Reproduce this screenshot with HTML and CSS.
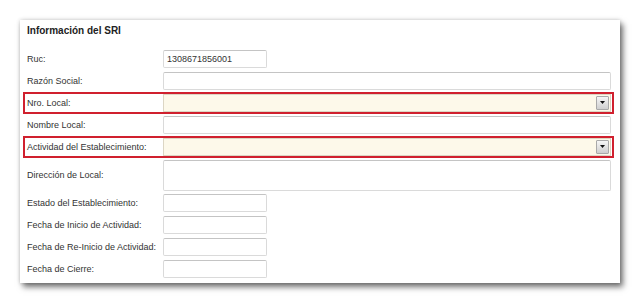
FILE: index.html
```html
<!doctype html>
<html lang="es">
<head>
    <meta charset="UTF-8">
    <link rel="stylesheet" href="styles.css">
    <title>Información del SRI</title>
</head>
<body>
    <div class="panel">
        <h2 class="panel-title">Información del SRI</h2>

        <div class="row">
            <label for="ruc">Ruc:</label>
            <input type="text" id="ruc" class="short" value="1308671856001">
        </div>

        <div class="row">
            <label for="razon">Razón Social:</label>
            <input type="text" id="razon" class="wide">
        </div>

        <!-- campo marcado -->
        <div class="row marked">
            <label for="nro-local">Nro. Local:</label>
            <div class="select-box">
                <select id="nro-local"></select>
                <span class="arrow"><svg width="5" height="4" viewBox="0 0 5 4"><path d="M0 0H5L2.5 3Z" fill="#111"/></svg></span>
            </div>
        </div>

        <div class="row">
            <label for="nombre">Nombre Local:</label>
            <input type="text" id="nombre" class="wide">
        </div>

        <!-- campo marcado -->
        <div class="row marked">
            <label for="actividad">Actividad del Establecimiento:</label>
            <div class="select-box">
                <select id="actividad"></select>
                <span class="arrow"><svg width="5" height="4" viewBox="0 0 5 4"><path d="M0 0H5L2.5 3Z" fill="#111"/></svg></span>
            </div>
        </div>

        <div class="row tall">
            <label for="direccion">Dirección de Local:</label>
            <textarea id="direccion" class="wide"></textarea>
        </div>

        <div class="row">
            <label for="estado">Estado del Establecimiento:</label>
            <input type="text" id="estado" class="short">
        </div>

        <div class="row">
            <label for="inicio">Fecha de Inicio de Actividad:</label>
            <input type="text" id="inicio" class="short">
        </div>

        <div class="row">
            <label for="reinicio">Fecha de Re-Inicio de Actividad:</label>
            <input type="text" id="reinicio" class="short">
        </div>

        <div class="row">
            <label for="cierre">Fecha de Cierre:</label>
            <input type="text" id="cierre" class="short">
        </div>
    </div>
</body>
</html>
```

FILE: styles.css
```css
body {
    margin: 0;
    padding: 20px;
    background-color: #fff;
    font-family: "Liberation Sans", Arial, sans-serif;
    color: #333;
}

.panel {
    width: 600px;
    height: 263px;
    box-sizing: border-box;
    padding: 4px 9px 0 7px;
    background-color: #fff;
    box-shadow: 3px 4px 6px rgba(0, 0, 0, 0.55), 0 0 4px rgba(0, 0, 0, 0.2);
}

.panel-title {
    margin: 0 0 10px 0;
    font-size: 10px;
    line-height: 14px;
    font-weight: bold;
    color: #222;
}

.row {
    display: flex;
    align-items: center;
    height: 22px;
}

.row.tall {
    height: 34px;
}

.row label {
    width: 136px;
    flex-shrink: 0;
    font-size: 9px;
    color: #333;
}

.row.marked {
    box-sizing: border-box;
    margin: 0 -3px 0 -4px;
    padding: 0 1px 0 2px;
    border: 2px solid #d0202e;
}

input[type="text"], textarea {
    box-sizing: border-box;
    height: 18px;
    margin: 0;
    padding: 0 3px;
    border: 1px solid #dadada;
    border-top-color: #c4c4c4;
    border-radius: 2px;
    font-family: "Liberation Sans", Arial, sans-serif;
    font-size: 9px;
    color: #333;
    background-color: #fff;
}

.short {
    width: 104px;
}

.wide {
    flex: 1;
}

textarea {
    height: 31px;
    resize: none;
}

.select-box {
    flex: 1;
    display: flex;
    align-items: center;
    box-sizing: border-box;
    height: 18px;
    border: 1px solid #dcd6c4;
    background-color: #fdf9ea;
}

.select-box select {
    flex: 1;
    height: 100%;
    border: none;
    background: transparent;
    appearance: none;
    -webkit-appearance: none;
    outline: none;
}

.arrow {
    display: flex;
    align-items: center;
    justify-content: center;
    box-sizing: border-box;
    width: 13px;
    height: 14px;
    margin-right: 1px;
    border: 1px solid #a9a9a9;
    border-radius: 1px;
    background: linear-gradient(#f6f6f6, #cfcfcf);
}
```
